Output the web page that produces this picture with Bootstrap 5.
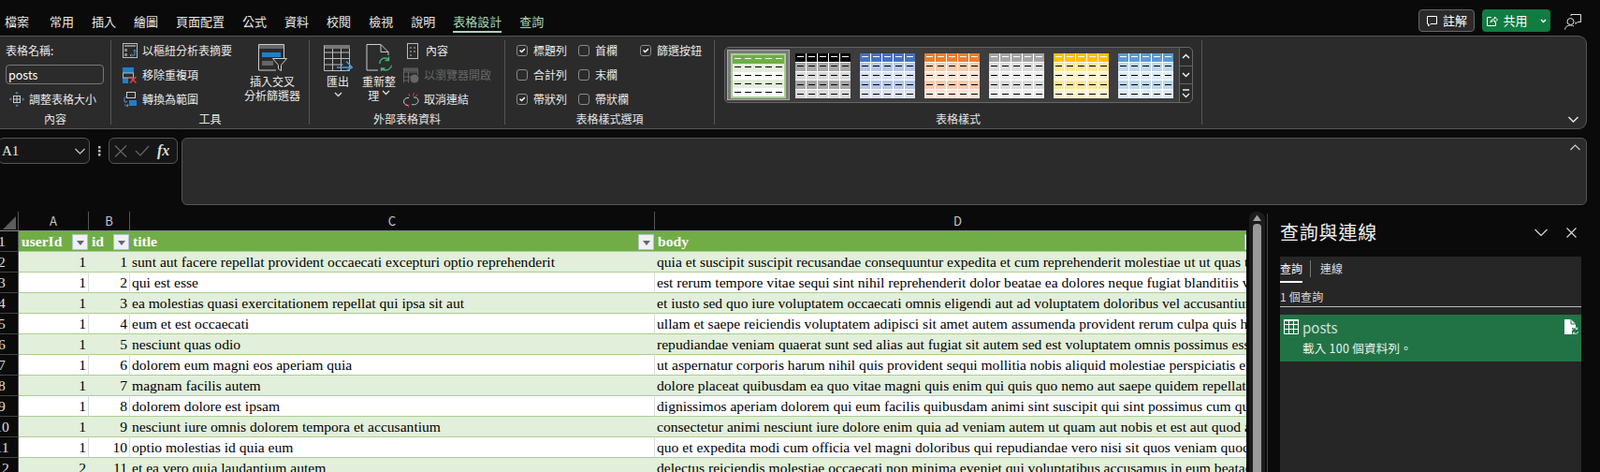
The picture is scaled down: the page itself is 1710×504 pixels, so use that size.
<!DOCTYPE html>
<html lang="zh-Hant">
<head>
  <meta charset="UTF-8">
  <title>posts - Excel</title>
  <link href="https://cdn.jsdelivr.net/npm/bootstrap@5.3.3/dist/css/bootstrap.min.css" rel="stylesheet">
  <style>
    html, body { height: 504px; overflow: hidden; }
    body { background: #0a0a0a; color: #e8e8e8; font-family: "Noto Sans CJK TC", "Liberation Sans", sans-serif; font-size: 12px; }
    svg { display: block; flex: none; }

    /* title bar + tabs */
    .top-bar { height: 38px; padding-left: 5px; padding-right: 20px; }
    .tab-list { gap: 19px; }
    .tab-list li:first-child { margin-right: 3px; }
    .tab-list .nav-link { padding: 13px 0 0; height: 35px; line-height: 20px; font-size: 13px; color: #e6e6e6; }
    .tab-list .nav-link.is-on { color: #a6d7b8; border-bottom: 2px solid #a6d7b8; }
    .tab-list .nav-link.is-extra { color: #a6d7b8; }
    .note-btn, .share-btn { height: 24px; margin-top: 10px; border-radius: 4px; padding: 0; font-size: 13px; color: #fff; gap: 5px; }
    .note-btn { width: 60px; background: #2b2b2b; border: 1px solid #666; }
    .share-btn { width: 73px; margin-left: 8px; background: #107c41; border: 0; }
    .user-icon { margin: 14px 0 0 15px; }

    /* ribbon */
    .ribbon { height: 100px; width: 1696px; background: #2b2b2b; border: 1px solid #555; border-left: 0; border-radius: 0 9px 9px 0; padding-top: 4px; position: relative; }
    .rb-group { height: 90px; border-right: 1px solid #555; flex: none; }
    .rb-content { height: 78px; }
    .rb-label { height: 12px; line-height: 12px; text-align: center; color: #e4e4e4; white-space: nowrap; }
    .g-name { width: 119px; padding-left: 6px; }
    .g-name .rb-label { margin-left: -6px; }
    .g-tools { width: 212px; }
    .g-ext { width: 209px; }
    .g-opts { width: 224px; }
    .g-gallery { width: 521px; }
    .small-rows { display: grid; grid-auto-rows: 22px; row-gap: 4px; }
    .small-btn { display: flex; align-items: center; gap: 5px; white-space: nowrap; height: 22px; }
    .muted-text { color: #666; }
    .name-label { height: 22px; line-height: 22px; }
    .name-input.form-control { width: 105px; height: 21px; min-height: 0; margin: 4px 0 5px; padding: 0 2px; background: #2b2b2b; border: 1px solid #777; border-radius: 4px; color: #fff; font-size: 12.5px; box-shadow: none; }
    .big-btn { display: flex; flex-direction: column; align-items: center; text-align: center; line-height: 15px; padding-top: 4px; flex: none; }
    .big-btn svg { margin-bottom: 3px; }
    .tiny-chev { display: inline-block; vertical-align: 2px; }
    .w-slicer { width: 66px; margin-right: 6px; }
    .w-big { width: 44px; }
    .opt-col { display: grid; grid-auto-rows: 22px; row-gap: 4px; }
    .opt-first { width: 66px; margin-left: 12px; }
    .opt-second { width: 66px; }
    .opt-row { display: flex; align-items: center; gap: 6px; white-space: nowrap; }
    .opt-row .form-check-input { width: 12px; height: 12px; margin: 0; background-color: transparent; border: 1px solid #8a8a8a; border-radius: 3px; box-shadow: none; }
    .opt-row .form-check-input:checked { background-color: transparent; border-color: #8a8a8a; }
    .g-gallery .rb-content { padding: 7px 0 0 10px; }
    .gallery { height: 60px; width: 501px; background: #3d3d3d; border: 1px solid #666; border-radius: 5px; padding: 2px 0 0 2px; }
    .gal-items { gap: 2px; width: 483px; flex: none; }
    .gal-item { width: 67px; height: 54px; padding: 3px; border: 1px solid transparent; flex: none; }
    .gal-item.is-on { background: #7a7a7a; border-color: #ababab; }
    .swatch { display: grid; grid-template-columns: repeat(5, 1fr); grid-template-rows: repeat(5, 1fr); gap: 1px; height: 48px; background: #fff; }
    .swatch b { position: relative; display: block; }
    .swatch b::after { content: ""; position: absolute; left: 22%; right: 22%; top: 50%; margin-top: -1px; height: 1px; background: #000; }
    .swatch b.cell-h::after { background: #fff; }
    .cell-h { background: var(--sw-h); }
    .cell-a { background: var(--sw-a); }
    .cell-b { background: var(--sw-b); }
    .sw-green { --sw-h: #70ad47; --sw-a: #e2efda; --sw-b: #fff; gap: 0; border: 2px solid #a9d08e; }
    .sw-black { --sw-h: #000; --sw-a: #a6a6a6; --sw-b: #d9d9d9; }
    .sw-blue { --sw-h: #4472c4; --sw-a: #b4c6e7; --sw-b: #d9e1f2; }
    .sw-orange { --sw-h: #ed7d31; --sw-a: #f8cbad; --sw-b: #fce4d6; }
    .sw-gray { --sw-h: #a5a5a5; --sw-a: #dbdbdb; --sw-b: #ededed; }
    .sw-yellow { --sw-h: #ffc000; --sw-a: #ffe699; --sw-b: #fff2cc; }
    .sw-sky { --sw-h: #5b9bd5; --sw-a: #bdd7ee; --sw-b: #ddebf7; }
    .gal-scroll { width: 15px; margin-top: -2px; height: 58px; border-left: 1px solid #666; }
    .gal-scroll span { flex: 1; display: flex; align-items: center; justify-content: center; border-bottom: 1px solid #666; background: #2b2b2b; }
    .gal-scroll span:last-child { border-bottom: 0; border-radius: 0 0 5px 0; }
    .gal-scroll span:first-child { border-radius: 0 5px 0 0; }
    .rb-collapse { position: absolute; right: 8px; bottom: 6px; }

    /* formula bar */
    .formula-row { height: 72px; margin-top: 9px; }
    .name-box, .fx-box, .formula-box { border: 1px solid #555; border-radius: 6px; }
    .name-box { width: 98px; margin-left: -2px; height: 28px; padding: 0 4px 0 3px; background: #161616; font-family: "Liberation Serif", serif; font-size: 15px; }
    .bar-dots { width: 20px; height: 28px; }
    .fx-box { width: 74px; height: 28px; padding: 0 5px; background: #161616; gap: 8px; }
    .fx-glyph { font-family: "Liberation Serif", serif; font-style: italic; font-weight: 700; font-size: 16px; color: #ddd; line-height: 1; }
    .formula-box { width: 1502px; margin-left: 4px; height: 72px; background: #2b2b2b; position: relative; }
    .formula-box svg { position: absolute; right: 6px; top: 6px; }

    /* sheet */
    .sheet-area { margin-top: 7px; height: 278px; }
    .sheet-wrap { width: 1332px; height: 278px; overflow: hidden; flex: none; }
    .sheet { table-layout: fixed; width: 1348px; border-collapse: separate; border-spacing: 0; font-family: "Liberation Serif", serif; font-size: 15.6px; color: #000; }
    .sheet th, .sheet td { height: 22px; padding: 0 2px; overflow: hidden; white-space: nowrap; line-height: 21px; box-sizing: border-box; }
    .c-no { width: 20px; }
    .c-a { width: 75px; }
    .c-b { width: 44px; }
    .c-c { width: 561px; }
    .c-d { width: 648px; }
    .col-head th { height: 21px; background: #0a0a0a; color: #c8c8c8; border-right: 1px solid #555; border-bottom: 1px solid #8a8a8a; font-family: "Noto Sans CJK TC", sans-serif; font-weight: 400; font-size: 13px; text-align: center; line-height: 20px; }
    .col-head th.corner { padding: 0; }
    .corner-tri { width: 14px; height: 14px; margin: 4px 0 0 3px; background: #5c5c5c; clip-path: polygon(100% 0, 100% 100%, 0 100%); }
    .sheet .row-no { width: 19px; padding: 0; background: #0a0a0a; color: #ddd; border-right: 1px solid #555; border-bottom: 1px solid #444; font-weight: 400; overflow: hidden; }
    .row-no span { display: block; width: 30px; margin-left: -13px; text-align: center; }
    .head-row td { background: #70ad47; color: #fff; font-weight: 700; border-bottom: 1px solid #a9d08e; position: relative; padding-left: 3px; }
    .filter-btn { position: absolute; right: 1px; top: 3px; width: 17px; height: 17px; background: #eef0f6; border: 1px solid #b6bfd0; }
    .filter-btn::after { content: ""; position: absolute; left: 4px; top: 6px; border: 4px solid transparent; border-top: 5px solid #666; border-bottom: 0; }
    .band-a td { background: #e2efda; border-bottom: 1px solid #a9d08e; border-right: 1px solid #e2efda; }
    .band-b td { background: #fff; border-bottom: 1px solid #a9d08e; border-right: 1px solid #dcdcdc; }
    .sheet .band-a td.row-no, .sheet .band-b td.row-no, .sheet .head-row td.row-no { background: #0a0a0a; color: #ddd; border-right: 1px solid #555; border-bottom: 1px solid #444; padding: 0; font-weight: 400; }
    .v-scroll { width: 17px; margin-left: 3px; height: 278px; background: #1c1c1c; border-radius: 8px 8px 0 0; padding-top: 3px; flex: none; }
    .v-thumb { width: 9px; flex: 1; margin-top: 3px; background: #9a9a9a; border-radius: 4px 4px 0 0; }

    /* side pane */
    .side-pane { width: 356px; margin-left: 2px; margin-top: 2px; padding: 0 20px 0 13px; border-left: 1px solid #444; flex: none; }
    .pane-head { height: 46px; padding-bottom: 6px; }
    .pane-title { font-size: 20px; letter-spacing: .8px; color: #f0f0f0; line-height: 40px; margin: 0; font-weight: 400; }
    .pane-close { margin: 0 5px 0 20px; }
    .pane-body { background: #262626; height: 230px; }
    .pane-tabs { height: 28px; }
    .pane-tabs .nav-link { padding: 2px 0 0; height: 28px; line-height: 22px; color: #dcdcdc; font-size: 12px; }
    .pane-tabs .nav-link.is-on { color: #fff; border-bottom: 2px solid #fff; }
    .pane-sep { width: 1px; height: 18px; margin: 4px 10px 0 8px; background: #777; }
    .pane-count { height: 26px; line-height: 30px; border-bottom: 1px solid #bbb; font-size: 12px; color: #dcdcdc; letter-spacing: .2px; }
    .query-card { height: 50px; margin-top: 8px; padding: 5px 3px 0 4px; background: #217346; gap: 4px; }
    .query-name { font-size: 15px; line-height: 20px; color: #cfe0d6; margin-top: -1px; }
    .query-note { font-size: 12.5px; line-height: 20px; color: #ecf3ef; margin-top: 2px; letter-spacing: .25px; }
  </style>
</head>
<body>

<!-- Tabs -->
<div class="top-bar d-flex">
  <ul class="nav tab-list flex-nowrap">
    <li><a class="nav-link" href="#">檔案</a></li>
    <li><a class="nav-link" href="#">常用</a></li>
    <li><a class="nav-link" href="#">插入</a></li>
    <li><a class="nav-link" href="#">繪圖</a></li>
    <li><a class="nav-link" href="#">頁面配置</a></li>
    <li><a class="nav-link" href="#">公式</a></li>
    <li><a class="nav-link" href="#">資料</a></li>
    <li><a class="nav-link" href="#">校閱</a></li>
    <li><a class="nav-link" href="#">檢視</a></li>
    <li><a class="nav-link" href="#">說明</a></li>
    <li><a class="nav-link is-on" href="#">表格設計</a></li>
    <li><a class="nav-link is-extra" href="#">查詢</a></li>
  </ul>
  <div class="ms-auto d-flex align-items-start">
    <button class="btn note-btn d-flex align-items-center justify-content-center">
      <svg width="13" height="13" viewBox="0 0 13 13" fill="none" stroke="#fff"><path d="M1.5 1.5h10v8H5l-2.5 2.5v-2.5h-1z"/></svg>註解
    </button>
    <button class="btn share-btn d-flex align-items-center justify-content-center">
      <svg width="13" height="13" viewBox="0 0 13 13" fill="none" stroke="#fff"><path d="M6 2.5H1.5v9h9V8M5 8c.3-2.5 2-4 4.5-4V2l3 3-3 3V6C7.500 6 6 6.500 5 8z"/></svg>共用
      <svg class="ms-2" width="7" height="5" viewBox="0 0 7 5" fill="none" stroke="#fff" stroke-width="1.4"><path d="M1 1l2.500 2.500L6 1"/></svg>
    </button>
    <svg class="user-icon" width="18" height="18" viewBox="0 0 18 18" fill="none" stroke="#ddd"><circle cx="6.500" cy="9" r="3.500"/><path d="M.5 17.500c.5-3 2.500-4.500 6-4.500 1.500 0 2.500.3 3.500 1M7 3V1.500h10.500v8H14l-2 2v-2"/></svg>
  </div>
</div>

<!-- Ribbon -->
<div class="ribbon d-flex">
  <div class="rb-group g-name">
    <div class="rb-content">
      <div class="name-label">表格名稱:</div>
      <input class="form-control name-input" value="posts">
      <div class="small-btn">
        <svg class="ms-1" width="16" height="16" viewBox="0 0 16 16" fill="none" stroke="#ccc"><rect x="4.500" y="4.500" width="7" height="7"/><path d="M8 4.500v7M4.500 8h7"/><path stroke="#4a9bd8" d="M8 .5v2M6.800 1.800L8 .5l1.200 1.300M8 15.500v-2M6.800 14.200L8 15.500l1.200-1.300M.5 8h2M1.800 6.800L.5 8l1.300 1.200M15.500 8h-2M14.200 6.800L15.500 8l-1.300 1.200"/></svg>
        <span>調整表格大小</span>
      </div>
    </div>
    <div class="rb-label">內容</div>
  </div>

  <div class="rb-group g-tools">
    <div class="rb-content d-flex">
      <div class="small-rows ms-2 ps-1">
        <div class="small-btn">
          <svg width="16" height="16" viewBox="0 0 16 16" fill="none" stroke="#bbb"><rect x=".5" y=".5" width="15" height="15"/><path fill="#888" stroke="none" d="M2 2h12v2H2zM2 6h3v3H2zM2 11h3v3H2z"/><path stroke="#3d9ae0" d="M8 13h5V7M11.500 8.500L13 7l1.500 1.500M9.500 11.500L8 13l1.500 1.500"/></svg>
          <span>以樞紐分析表摘要</span>
        </div>
        <div class="small-btn">
          <svg width="16" height="17" viewBox="0 0 16 17" fill="none"><path fill="#1f7fc9" d="M0 0h12v6H0zM0 11h6v6H0z"/><rect x=".5" y="6" width="11" height="5" stroke="#bbb"/><path stroke="#e2413c" stroke-width="1.500" d="M8 10l6.500 6.500M14.500 10L8 16.500"/></svg>
          <span>移除重複項</span>
        </div>
        <div class="small-btn">
          <svg width="16" height="16" viewBox="0 0 16 16" fill="none"><rect x="4.500" y=".5" width="9" height="6" stroke="#ccc"/><path fill="#1f7fc9" d="M7 9h8v6H7z"/><path stroke="#4a9bd8" d="M4 5C1.500 6 1 9 3 11M1.500 9.500L3 11.500 5 10M6 15c-2 0-3-.7-4-1.500M3.800 15.500L6 15l-.8-2"/></svg>
          <span>轉換為範圍</span>
        </div>
      </div>
      <div class="big-btn ms-auto w-slicer">
        <svg width="31" height="29" viewBox="0 0 31 29" fill="none"><path stroke="#ccc" d="M19 28H.5V.5h27V16"/><path fill="#666" d="M1 1h26v4H1z"/><path fill="#1f7fc9" d="M4 9h20v5H4z"/><path fill="#666" d="M4 18h12v5H4z"/><path stroke="#ccc" d="M15.500 15.500h15l-6 7v6l-3-2v-4z"/></svg>
        <span>插入交叉<br>分析篩選器</span>
      </div>
    </div>
    <div class="rb-label">工具</div>
  </div>

  <div class="rb-group g-ext">
    <div class="rb-content d-flex">
      <div class="big-btn ms-2 w-big">
        <svg width="31" height="29" viewBox="0 0 31 29" fill="none"><path stroke="#bbb" d="M.5 1.500h27v27H.5zM.5 9h27M.5 15.500h27M.5 22h20M9.500 4v24M18.500 4v24"/><path fill="#777" d="M1 1h27v4H1z"/><path stroke="#4a9bd8" stroke-width="1.300" d="M14 25h16M24 18.500l6.500 6.500-6.500 3.500"/></svg>
        <span>匯出</span>
        <svg class="mt-1" width="9" height="6" viewBox="0 0 9 6" fill="none" stroke="#ddd" stroke-width="1.300"><path d="M1 1l3.500 3.500L8 1"/></svg>
      </div>
      <div class="big-btn w-big">
        <svg width="28" height="29" viewBox="0 0 28 29" fill="none"><path stroke="#ccc" d="M13 28H1V.5h15l8 8V12M16 .5V8.500h8"/><path stroke="#3fb56f" stroke-width="1.400" d="M15 21c-.5-3.500 2-6 5.500-6 1.500 0 3 .7 4 2M27 23c.5 0-.5 4.500-6 5-2 0-3.500-.7-4.500-2M24.500 13.500V17.500H20.500M16.500 30v-4h4"/></svg>
        <span>重新整<br>理 <svg class="tiny-chev d-inline" width="9" height="6" viewBox="0 0 9 6" fill="none" stroke="#ddd" stroke-width="1.300"><path d="M1 1l3.500 3.500L8 1"/></svg></span>
      </div>
      <div class="small-rows ms-1">
        <div class="small-btn gap-2">
          <svg class="ms-1" width="12" height="17" viewBox="0 0 12 17" fill="none"><rect x=".5" y=".5" width="11" height="16" stroke="#bbb"/><path stroke="#bbb" d="M3 5h2M3 9h2M7 5h2M7 9h2M3 13h2"/></svg>
          <span>內容</span>
        </div>
        <div class="small-btn">
          <svg width="17" height="17" viewBox="0 0 17 17" fill="none" stroke="#666"><path d="M.5 16.500V1h15v7M.5 5h15M.5 10h8M.5 14h6M5.500 5v11.500"/><path fill="#555" stroke="none" d="M.5 1h15v3H.5z"/><circle cx="12" cy="12" r="4.500" fill="#666" stroke="none"/></svg>
          <span class="muted-text">以瀏覽器開啟</span>
        </div>
        <div class="small-btn">
          <svg width="17" height="17" viewBox="0 0 17 17" fill="none"><path stroke="#ccc" d="M6 6.500C3 6 .5 8 .5 10.500S3 14.500 5 14.500M9 13.500c3 1 7-.5 7-4 0-2.500-2.500-4-5-3.500"/><path stroke="#e2413c" d="M11.500 1l-1 3.500M15.500 3l-2.500 2M6 2l.5 3M2 14.500L4 13M5.500 16.500l.5-3"/></svg>
          <span>取消連結</span>
        </div>
      </div>
    </div>
    <div class="rb-label">外部表格資料</div>
  </div>

  <div class="rb-group g-opts">
    <div class="rb-content d-flex">
      <div class="opt-col opt-first">
        <label class="opt-row"><input class="form-check-input" type="checkbox" checked>標題列</label>
        <label class="opt-row"><input class="form-check-input" type="checkbox">合計列</label>
        <label class="opt-row"><input class="form-check-input" type="checkbox" checked>帶狀列</label>
      </div>
      <div class="opt-col opt-second">
        <label class="opt-row"><input class="form-check-input" type="checkbox">首欄</label>
        <label class="opt-row"><input class="form-check-input" type="checkbox">末欄</label>
        <label class="opt-row"><input class="form-check-input" type="checkbox">帶狀欄</label>
      </div>
      <div class="opt-col">
        <label class="opt-row"><input class="form-check-input" type="checkbox" checked>篩選按鈕</label>
      </div>
    </div>
    <div class="rb-label">表格樣式選項</div>
  </div>

  <div class="rb-group g-gallery">
    <div class="rb-content">
      <div class="gallery d-flex">
        <div class="gal-items d-flex" id="gallery-items"></div>
        <div class="gal-scroll d-flex flex-column">
          <span><svg width="9" height="6" viewBox="0 0 9 6" fill="none" stroke="#eee" stroke-width="1.500"><path d="M1 5l3.500-3.500L8 5"/></svg></span>
          <span><svg width="9" height="6" viewBox="0 0 9 6" fill="none" stroke="#eee" stroke-width="1.500"><path d="M1 1l3.500 3.500L8 1"/></svg></span>
          <span><svg width="9" height="10" viewBox="0 0 9 10" fill="none" stroke="#eee" stroke-width="1.300"><path d="M1 1h7M1 5l3.500 3.500L8 5"/></svg></span>
        </div>
      </div>
    </div>
    <div class="rb-label">表格樣式</div>
  </div>

  <svg class="rb-collapse" width="11" height="7" viewBox="0 0 11 7" fill="none" stroke="#eee" stroke-width="1.300"><path d="M.5 1l5 5 5-5"/></svg>
</div>

<!-- Formula bar -->
<div class="formula-row d-flex align-items-start">
  <div class="name-box d-flex align-items-center justify-content-between">
    <span>A1</span>
    <svg width="11" height="7" viewBox="0 0 11 7" fill="none" stroke="#ccc" stroke-width="1.200"><path d="M.5 1l5 5 5-5"/></svg>
  </div>
  <div class="bar-dots d-flex align-items-center justify-content-center">
    <svg width="3" height="11" viewBox="0 0 3 11" fill="#bbb"><path d="M0 0h2.500v2.500H0zM0 4h2.500v2.500H0zM0 8h2.500v2.500H0z"/></svg>
  </div>
  <div class="fx-box d-flex align-items-center">
    <svg width="14" height="13" viewBox="0 0 14 13" fill="none" stroke="#666" stroke-width="1.200"><path d="M1 .5l12 12M13 .5l-12 12"/></svg>
    <svg width="16" height="12" viewBox="0 0 16 12" fill="none" stroke="#666" stroke-width="1.200"><path d="M1 6l5 5L15 1"/></svg>
    <span class="fx-glyph">fx</span>
  </div>
  <div class="formula-box">
    <svg width="11" height="7" viewBox="0 0 11 7" fill="none" stroke="#ccc" stroke-width="1.200"><path d="M.5 6l5-5 5 5"/></svg>
  </div>
</div>

<!-- Sheet and queries pane -->
<div class="sheet-area d-flex">
  <div class="sheet-wrap">
    <table class="sheet">
      <colgroup><col class="c-no"><col class="c-a"><col class="c-b"><col class="c-c"><col class="c-d"></colgroup>
      <thead>
        <tr class="col-head"><th class="corner"><div class="corner-tri"></div></th><th>A</th><th>B</th><th>C</th><th>D</th></tr>
      </thead>
      <tbody id="sheet-body"></tbody>
    </table>
  </div>
  <div class="v-scroll d-flex flex-column align-items-center">
    <svg width="9" height="7" viewBox="0 0 9 7" fill="#a0a0a0"><path d="M4.500 .5L9 7H0z"/></svg>
    <div class="v-thumb"></div>
  </div>

  <div class="side-pane">
    <div class="pane-head d-flex align-items-center">
      <h5 class="pane-title">查詢與連線</h5>
      <svg class="ms-auto" width="14" height="8" viewBox="0 0 14 8" fill="none" stroke="#ddd" stroke-width="1.100"><path d="M.5 1l6.500 6.500L13.500 1"/></svg>
      <svg class="pane-close" width="11" height="11" viewBox="0 0 11 11" fill="none" stroke="#ddd" stroke-width="1.100"><path d="M.5.5l10 10M10.500.5l-10 10"/></svg>
    </div>
    <div class="pane-body">
      <ul class="nav pane-tabs flex-nowrap">
        <li><a class="nav-link is-on" href="#">查詢</a></li>
        <li class="pane-sep"></li>
        <li><a class="nav-link" href="#">連線</a></li>
      </ul>
      <div class="pane-count">1 個查詢</div>
      <div class="query-card d-flex">
        <svg width="16" height="16" viewBox="0 0 16 16" fill="none" stroke="#fff"><path d="M.5.5h15v15H.5zM.5 5.500h15M.5 10.500h15M5.500 .5v15M10.500 .5v15"/><path fill="#fff" stroke="none" d="M0 0h16v2H0z"/></svg>
        <div>
          <div class="query-name">posts</div>
          <div class="query-note">載入 100 個資料列。</div>
        </div>
        <svg class="ms-auto" width="15" height="16" viewBox="0 0 15 16"><path fill="#fff" d="M0 0h7l5 5v4H8v7H0z"/><path fill="none" stroke="#217346" d="M7 0v5h5"/><path fill="none" stroke="#d8f0e0" d="M8.500 12c0-2 1.500-3 3-3 .8 0 1.500.3 2 1M14.500 13c0 1.500-1.500 2.500-3 2.500-.8 0-1.500-.3-2-1M13.700 8.500V10.500h-2M9.300 16v-1.800h2"/></svg>
      </div>
    </div>
  </div>
</div>

<script>
  const styles = ["green", "black", "blue", "orange", "gray", "yellow", "sky"];
  const rows = [
    [1, 1, "sunt aut facere repellat provident occaecati excepturi optio reprehenderit", "quia et suscipit suscipit recusandae consequuntur expedita et cum reprehenderit molestiae ut ut quas totam nostrum rerum est autem sunt rem eveniet architecto"],
    [1, 2, "qui est esse", "est rerum tempore vitae sequi sint nihil reprehenderit dolor beatae ea dolores neque fugiat blanditiis voluptate porro vel nihil molestiae ut reiciendis"],
    [1, 3, "ea molestias quasi exercitationem repellat qui ipsa sit aut", "et iusto sed quo iure voluptatem occaecati omnis eligendi aut ad voluptatem doloribus vel accusantium quis pariatur molestiae porro eius odio et labore"],
    [1, 4, "eum et est occaecati", "ullam et saepe reiciendis voluptatem adipisci sit amet autem assumenda provident rerum culpa quis hic commodi nesciunt rem tenetur doloremque ipsam iure"],
    [1, 5, "nesciunt quas odio", "repudiandae veniam quaerat sunt sed alias aut fugiat sit autem sed est voluptatem omnis possimus esse voluptatibus quis est aut tenetur dolor neque"],
    [1, 6, "dolorem eum magni eos aperiam quia", "ut aspernatur corporis harum nihil quis provident sequi mollitia nobis aliquid molestiae perspiciatis et ea nemo ab reprehenderit accusantium quas"],
    [1, 7, "magnam facilis autem", "dolore placeat quibusdam ea quo vitae magni quis enim qui quis quo nemo aut saepe quidem repellat excepturi ut quia sunt ut sequi eos ea sed quas"],
    [1, 8, "dolorem dolore est ipsam", "dignissimos aperiam dolorem qui eum facilis quibusdam animi sint suscipit qui sint possimus cum quaerat magni maiores excepturi ipsam ut commodi"],
    [1, 9, "nesciunt iure omnis dolorem tempora et accusantium", "consectetur animi nesciunt iure dolore enim quia ad veniam autem ut quam aut nobis et est aut quod aut provident voluptas autem voluptas"],
    [1, 10, "optio molestias id quia eum", "quo et expedita modi cum officia vel magni doloribus qui repudiandae vero nisi sit quos veniam quod sed accusamus veritatis error"],
    [2, 11, "et ea vero quia laudantium autem", "delectus reiciendis molestiae occaecati non minima eveniet qui voluptatibus accusamus in eum beatae sit vel qui neque voluptates ut commodi qui incidunt"]
  ];

  // table style thumbnails
  document.getElementById("gallery-items").innerHTML = styles.map((name, i) => {
    let cells = "";
    ["h", "a", "b", "a", "b"].forEach(kind => { cells += `<b class="cell-${kind}"></b>`.repeat(5); });
    return `<div class="gal-item ${i === 0 ? "is-on" : ""}"><div class="swatch sw-${name}">${cells}</div></div>`;
  }).join("");

  // sheet rows
  let html = `<tr class="head-row"><td class="row-no"><span>1</span></td>
    <td>userId<i class="filter-btn"></i></td><td>id<i class="filter-btn"></i></td>
    <td>title<i class="filter-btn"></i></td><td>body<i class="filter-btn"></i></td></tr>`;
  rows.forEach((r, i) => {
    html += `<tr class="${i % 2 === 0 ? "band-a" : "band-b"}"><td class="row-no"><span>${i + 2}</span></td>
      <td class="text-end">${r[0]}</td><td class="text-end">${r[1]}</td><td>${r[2]}</td><td>${r[3]}</td></tr>`;
  });
  document.getElementById("sheet-body").innerHTML = html;
</script>

<script src="https://cdn.jsdelivr.net/npm/bootstrap@5.3.3/dist/js/bootstrap.bundle.min.js"></script>
</body>
</html>
